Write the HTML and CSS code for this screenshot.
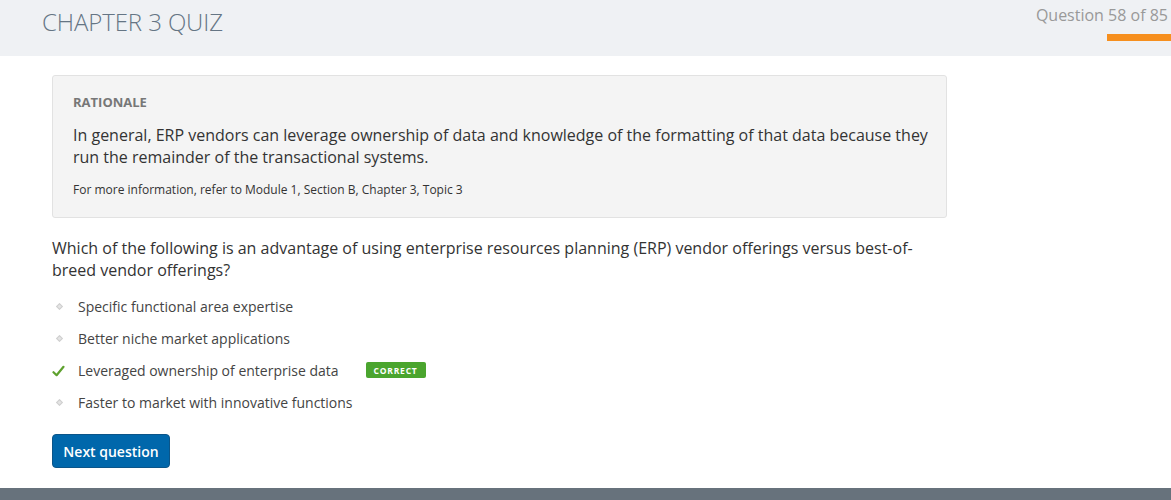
FILE: index.html
```html
<!DOCTYPE html>
<html>
<head>
<meta charset="utf-8">
<link rel="stylesheet" href="styles.css">
</head>
<body>
<header class="header">
  <h1 class="title">CHAPTER 3 QUIZ</h1>
  <div class="progress">
    <div class="progress-text">Question 58 of 85</div>
    <div class="progress-bar"></div>
  </div>
</header>
<main class="main">
  <section class="rationale">
    <div class="rationale-label">RATIONALE</div>
    <p class="rationale-text">In general, ERP vendors can leverage ownership of data and knowledge of the formatting of that data because they run the remainder of the transactional systems.</p>
    <p class="rationale-ref">For more information, refer to Module 1, Section B, Chapter 3, Topic 3</p>
  </section>
  <p class="question">Which of the following is an advantage of using enterprise resources planning (ERP) vendor offerings versus best-of-breed vendor offerings?</p>
  <ul class="options">
    <li class="option"><span class="marker"><span class="diamond"></span></span>Specific functional area expertise</li>
    <li class="option"><span class="marker"><span class="diamond"></span></span>Better niche market applications</li>
    <li class="option"><span class="marker"><svg width="13" height="12" viewBox="0 0 13 12"><path d="M1.5 7.2 L4.6 10.2 L11.5 1.8" fill="none" stroke="#5ea12e" stroke-width="2.2" stroke-linecap="round" stroke-linejoin="round"/></svg></span>Leveraged ownership of enterprise data<span class="badge">CORRECT</span></li>
    <li class="option"><span class="marker"><span class="diamond"></span></span>Faster to market with innovative functions</li>
  </ul>
  <button class="next">Next question</button>
</main>
<footer class="footer"></footer>
</body>
</html>
```
FILE: styles.css
```css
html, body {
  margin: 0;
  padding: 0;
}
body {
  font-family: "Open Sans", "Liberation Sans", sans-serif;
  color: #333;
  background: #fff;
  width: 1171px;
  height: 500px;
  display: flex;
  flex-direction: column;
  overflow: hidden;
}
.header {
  background: #eff1f4;
  height: 56px;
  display: flex;
  justify-content: space-between;
  align-items: flex-start;
  flex-shrink: 0;
}
.title {
  margin: 6px 0 0 42px;
  font-weight: 300;
  font-size: 24px;
  line-height: 32px;
  color: #657584;
  letter-spacing: -0.1px;
}
.progress {
  display: flex;
  flex-direction: column;
  align-items: flex-end;
}
.progress-text {
  margin-top: 4px;
  margin-right: 3px;
  font-size: 16px;
  line-height: 22px;
  color: #999;
}
.progress-bar {
  margin-top: 8px;
  width: 64px;
  height: 7px;
  background: #f68f1e;
}
.main {
  flex: 1;
  padding: 19px 0 0 52px;
  width: 895px;
}
.rationale {
  background: #f4f4f4;
  border: 1px solid #e2e2e2;
  border-radius: 3px;
  padding: 18px 10px 19px 20px;
}
.rationale-label {
  font-size: 13px;
  font-weight: 700;
  color: #777;
  line-height: 16px;
}
.rationale-text {
  margin: 14px 0 0 0;
  font-size: 16px;
  line-height: 22px;
  color: #333;
}
.rationale-ref {
  margin: 14px 0 0 0;
  font-size: 12px;
  line-height: 16px;
  color: #333;
}
.question {
  margin: 19px 0 0 0;
  font-size: 16px;
  line-height: 22px;
  color: #333;
}
.options {
  list-style: none;
  margin: 9px 0 0 0;
  padding: 0;
}
.option {
  display: flex;
  align-items: center;
  height: 32px;
  font-size: 14px;
  color: #444;
}
.marker {
  width: 26px;
  display: flex;
  align-items: center;
  justify-content: flex-start;
}
.diamond {
  display: block;
  width: 3px;
  height: 3px;
  margin-left: 5px;
  background: #e4e4e4;
  border: 1px solid #cfcfcf;
  transform: rotate(45deg);
}
.marker svg {
  display: block;
  margin-top: 2px;
}
.badge {
  margin-left: 27px;
  background: #4aa52e;
  color: #fff;
  font-size: 8.5px;
  font-weight: 700;
  letter-spacing: 0.8px;
  border-radius: 2px;
  width: 60px;
  height: 16px;
  display: flex;
  align-items: center;
  justify-content: center;
}
.next {
  margin-top: 16px;
  font-family: "Open Sans", "Liberation Sans", sans-serif;
  font-size: 14px;
  font-weight: 600;
  color: #fff;
  background: #0067ab;
  border: 1px solid #0b5589;
  border-radius: 4px;
  width: 118px;
  height: 34px;
  padding: 0;
}
.footer {
  height: 12px;
  background: #67727c;
  flex-shrink: 0;
}
```
